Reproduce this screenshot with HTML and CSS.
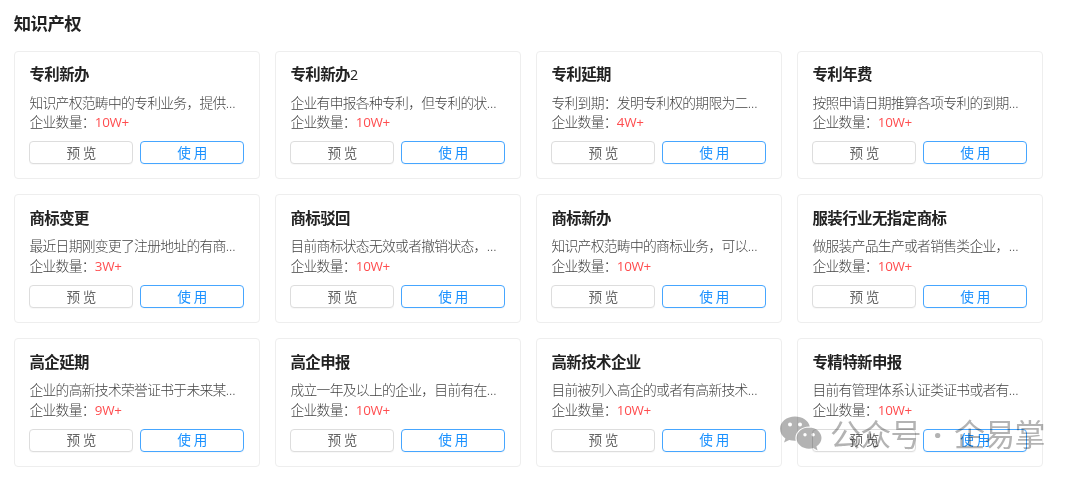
FILE: index.html
```html
<!DOCTYPE html>
<html lang="zh-CN">
<head>
    <meta charset="UTF-8">
    <meta name="viewport" content="width=device-width, initial-scale=1.0">
    <title>知识产权</title>
    <link rel="stylesheet" href="styles.css">
</head>
<body>
    <div class="container">
        <h2 class="section-title">知识产权</h2>

        <div class="card-list">
            <div class="card">
                <h3 class="card-title">专利新办</h3>
                <p class="card-desc">知识产权范畴中的专利业务，提供<span class="dots">...</span></p>
                <p class="card-count">企业数量：<span class="count">10W+</span></p>
                <div class="actions">
                    <button>预览</button>
                    <button class="use-button">使用</button>
                </div>
            </div>
            <div class="card">
                <h3 class="card-title">专利新办<span class="num">2</span></h3>
                <p class="card-desc">企业有申报各种专利，但专利的状<span class="dots">...</span></p>
                <p class="card-count">企业数量：<span class="count">10W+</span></p>
                <div class="actions">
                    <button>预览</button>
                    <button class="use-button">使用</button>
                </div>
            </div>
            <div class="card">
                <h3 class="card-title">专利延期</h3>
                <p class="card-desc">专利到期：发明专利权的期限为二<span class="dots">...</span></p>
                <p class="card-count">企业数量：<span class="count">4W+</span></p>
                <div class="actions">
                    <button>预览</button>
                    <button class="use-button">使用</button>
                </div>
            </div>
            <div class="card">
                <h3 class="card-title">专利年费</h3>
                <p class="card-desc">按照申请日期推算各项专利的到期<span class="dots">...</span></p>
                <p class="card-count">企业数量：<span class="count">10W+</span></p>
                <div class="actions">
                    <button>预览</button>
                    <button class="use-button">使用</button>
                </div>
            </div>

            <div class="card">
                <h3 class="card-title">商标变更</h3>
                <p class="card-desc">最近日期刚变更了注册地址的有商<span class="dots">...</span></p>
                <p class="card-count">企业数量：<span class="count">3W+</span></p>
                <div class="actions">
                    <button>预览</button>
                    <button class="use-button">使用</button>
                </div>
            </div>
            <div class="card">
                <h3 class="card-title">商标驳回</h3>
                <p class="card-desc">目前商标状态无效或者撤销状态，<span class="dots">...</span></p>
                <p class="card-count">企业数量：<span class="count">10W+</span></p>
                <div class="actions">
                    <button>预览</button>
                    <button class="use-button">使用</button>
                </div>
            </div>
            <div class="card">
                <h3 class="card-title">商标新办</h3>
                <p class="card-desc">知识产权范畴中的商标业务，可以<span class="dots">...</span></p>
                <p class="card-count">企业数量：<span class="count">10W+</span></p>
                <div class="actions">
                    <button>预览</button>
                    <button class="use-button">使用</button>
                </div>
            </div>
            <div class="card">
                <h3 class="card-title">服装行业无指定商标</h3>
                <p class="card-desc">做服装产品生产或者销售类企业，<span class="dots">...</span></p>
                <p class="card-count">企业数量：<span class="count">10W+</span></p>
                <div class="actions">
                    <button>预览</button>
                    <button class="use-button">使用</button>
                </div>
            </div>

            <div class="card">
                <h3 class="card-title">高企延期</h3>
                <p class="card-desc">企业的高新技术荣誉证书于未来某<span class="dots">...</span></p>
                <p class="card-count">企业数量：<span class="count">9W+</span></p>
                <div class="actions">
                    <button>预览</button>
                    <button class="use-button">使用</button>
                </div>
            </div>
            <div class="card">
                <h3 class="card-title">高企申报</h3>
                <p class="card-desc">成立一年及以上的企业，目前有在<span class="dots">...</span></p>
                <p class="card-count">企业数量：<span class="count">10W+</span></p>
                <div class="actions">
                    <button>预览</button>
                    <button class="use-button">使用</button>
                </div>
            </div>
            <div class="card">
                <h3 class="card-title">高新技术企业</h3>
                <p class="card-desc">目前被列入高企的或者有高新技术<span class="dots">...</span></p>
                <p class="card-count">企业数量：<span class="count">10W+</span></p>
                <div class="actions">
                    <button>预览</button>
                    <button class="use-button">使用</button>
                </div>
            </div>
            <div class="card">
                <h3 class="card-title">专精特新申报</h3>
                <p class="card-desc">目前有管理体系认证类证书或者有<span class="dots">...</span></p>
                <p class="card-count">企业数量：<span class="count">10W+</span></p>
                <div class="actions">
                    <button>预览</button>
                    <button class="use-button">使用</button>
                </div>
            </div>
        </div>
    </div>

    <div class="watermark">
        <svg width="42" height="35" viewBox="0 0 42 35">
            <path fill="#999" fill-rule="evenodd" d="M15 0.500C6.700 .5 0 6 0 12.800c0 4 2.100 7.300 5.400 9.600L4 26.600l5.200-2.600c2 .6 4 .9 6.600.8-.3-1-.4-1.800-.4-2.800 0-6.600 6.200-11.600 13.800-11.600h.6C28.400 4.500 22.400 .5 15 .5zM10 6.500a2 2 0 1 1 0 4 2 2 0 1 1 0-4zM20 6.500a2 2 0 1 1 0 4 2 2 0 1 1 0-4z"/>
            <path fill="#999" fill-rule="evenodd" d="M29 11.400c-7 0-12.500 4.700-12.500 10.700S22 32.800 29 32.800c1.500 0 3-.3 4.300-.7l4.300 2.400-1.200-3.900c3.100-2 5.100-5 5.100-8.500 0-6-5.500-10.700-12.500-10.700zM25 17a1.700 1.700 0 1 1 0 3.400 1.700 1.700 0 1 1 0-3.400zM33.200 17a1.700 1.700 0 1 1 0 3.400 1.700 1.700 0 1 1 0-3.400z"/>
        </svg>
        <span class="watermark-text">公众号<span class="watermark-dot">·</span>企易掌</span>
    </div>
</body>
</html>
```
FILE: styles.css
```css
:root {
    --text-primary: #222;
    --text-secondary: #666;
    --text-light: #444;
    --border: #eee;
    --button-border: #ddd;
    --accent: #1890ff;
    --danger: #ff4d4f;
}

* {
    margin: 0;
    padding: 0;
    box-sizing: border-box;
}

body {
    background-color: #fff;
    color: var(--text-primary);
    font-family: "Open Sans", "Noto Sans CJK SC", sans-serif;
    font-size: 13.8px;
    height: 478px;
    overflow: hidden;
}

.container {
    width: 1042.8px;
    padding: 11px 0 0 13.8px;
}

.section-title {
    font-size: 17.4px;
    letter-spacing: -0.6px;
    line-height: 24px;
    margin-bottom: 15.8px;
}

.card-list {
    display: grid;
    grid-template-columns: repeat(4, 1fr);
    gap: 15px;
}

.card {
    height: 128.7px;
    padding: 13.4px 14.6px 0;
    border: 1px solid var(--border);
    border-radius: 4px;
}

.card-title {
    font-size: 15.4px;
    letter-spacing: -0.5px;
    line-height: 20px;
    margin-bottom: 7.4px;
}

.num {
    font-size: 14.4px;
    font-weight: 400;
}

.card-desc,
.card-count {
    color: var(--text-light);
    font-weight: 300;
    line-height: 19.8px;
    letter-spacing: -0.71px;
    white-space: nowrap;
}

.dots {
    letter-spacing: 0;
}

.count {
    color: var(--danger);
    font-size: 13.4px;
    font-weight: 400;
    letter-spacing: -0.3px;
}

.actions {
    display: flex;
    gap: 7px;
    margin-top: 8.2px;
}

.actions button {
    flex: 1;
    height: 23px;
    padding: 0 0 0 3px;
    background-color: #fff;
    border: 1px solid var(--button-border);
    border-radius: 4px;
    box-shadow: 0 1px 1px rgba(0, 0, 0, 0.03);
    color: var(--text-secondary);
    font-family: inherit;
    font-size: 13.6px;
    line-height: 20px;
    letter-spacing: 2.8px;
    cursor: pointer;
}

.actions .use-button {
    border-color: #46a6ff;
    color: var(--accent);
}

.watermark {
    position: absolute;
    left: 780px;
    top: 416px;
    display: flex;
    gap: 8px;
    opacity: 0.75;
    mix-blend-mode: multiply;
    pointer-events: none;
}

.watermark-text {
    color: #999;
    font-size: 31px;
    line-height: 36px;
    font-weight: 400;
    letter-spacing: -0.7px;
    white-space: nowrap;
}

.watermark-dot {
    display: inline-block;
    width: 33px;
    font-weight: 700;
    text-align: center;
}
```
